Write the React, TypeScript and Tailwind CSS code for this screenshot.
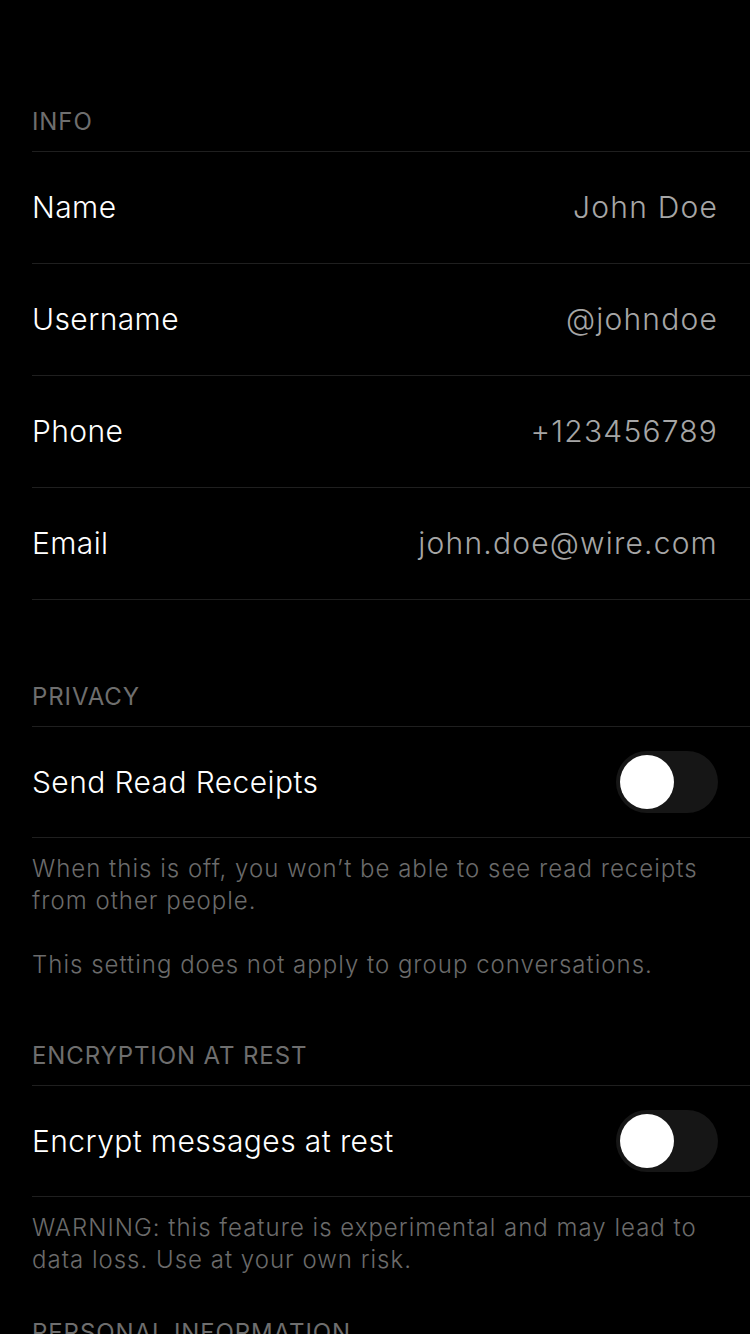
const font = { fontFamily: 'Inter, "Noto Sans", sans-serif' }

function Header({ title, className }: { title: string; className: string }) {
  return (
    <div className={`px-8 pb-[13px] text-[24px] leading-[32px] tracking-[0.9px] uppercase text-[#6e6e6e] ${className}`}>
      {title}
    </div>
  )
}

function InfoRow({ label, value }: { label: string; value: string }) {
  return (
    <div className="ml-8 flex h-[112px] items-center justify-between border-b border-[#1f1f1f] pr-8">
      <span className="text-[30px] font-light tracking-[0.4px] text-white">{label}</span>
      <span className="text-[30px] font-light tracking-[1.2px] text-[#a6a6a6]">{value}</span>
    </div>
  )
}

function Toggle() {
  return (
    <div className="flex h-[62px] w-[102px] items-center rounded-full bg-[#161616] px-[4px]">
      <div className="h-[54px] w-[54px] rounded-full bg-white" />
    </div>
  )
}

function ToggleRow({ label }: { label: string }) {
  return (
    <div className="ml-8 flex h-[111px] items-center justify-between border-b border-[#1f1f1f] pr-8">
      <span className="text-[30px] font-light tracking-[0.4px] text-white">{label}</span>
      <Toggle />
    </div>
  )
}

export default function App() {
  return (
    <div className="min-h-[1334px] w-full overflow-hidden bg-black" style={font}>
      <Header title="Info" className="pt-[106px]" />
      <div className="ml-8 border-t border-[#1f1f1f]" />
      <InfoRow label="Name" value="John Doe" />
      <InfoRow label="Username" value="@johndoe" />
      <InfoRow label="Phone" value="+123456789" />
      <InfoRow label="Email" value="john.doe@wire.com" />

      <Header title="Privacy" className="pt-[81px]" />
      <div className="ml-8 border-t border-[#1f1f1f]" />
      <ToggleRow label="Send Read Receipts" />
      <div className="px-8 pt-[15px] text-[24px] font-light leading-[32px] tracking-[1px] text-[#6b6b6b]">
        <p>When this is off, you won’t be able to see read receipts from other people.</p>
        <p className="mt-[32px]">This setting does not apply to group conversations.</p>
      </div>

      <Header title="Encryption at rest" className="pt-[59px]" />
      <div className="ml-8 border-t border-[#1f1f1f]" />
      <ToggleRow label="Encrypt messages at rest" />
      <div className="px-8 pt-[15px] text-[24px] font-light leading-[32px] tracking-[1px] text-[#6b6b6b]">
        <p>WARNING: this feature is experimental and may lead to data loss. Use at your own risk.</p>
      </div>

      <Header title="Personal Information" className="pt-[41px]" />
    </div>
  )
}
